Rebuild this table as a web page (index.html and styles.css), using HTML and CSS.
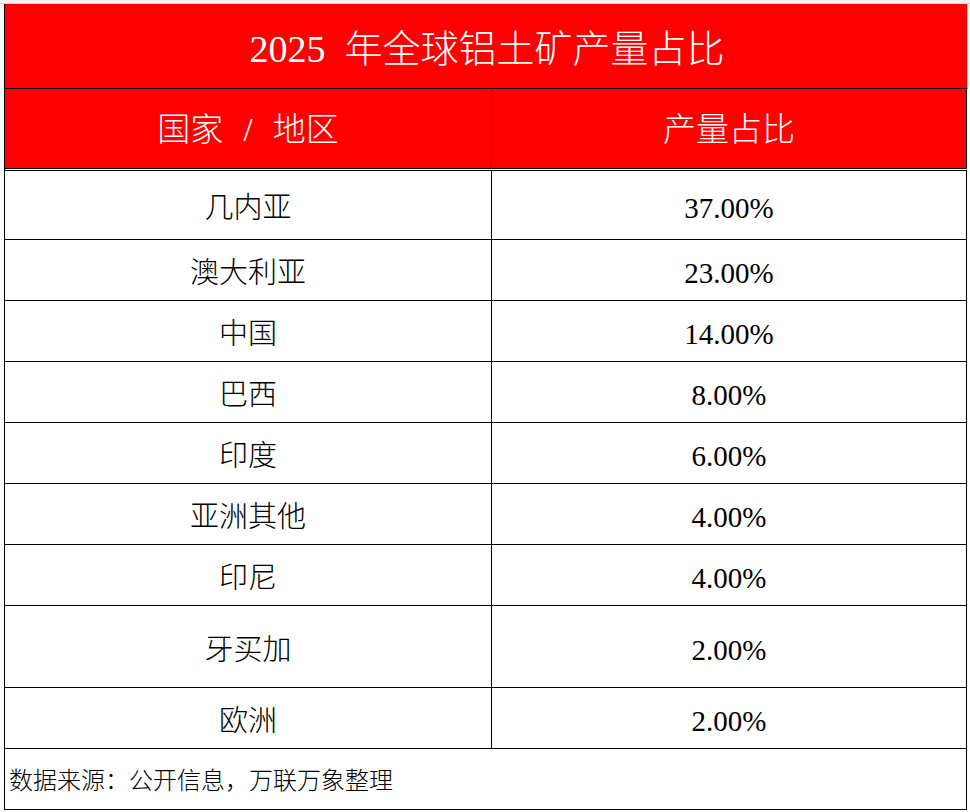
FILE: index.html
```html
<!DOCTYPE html>
<html lang="zh-CN">
<head>
<meta charset="utf-8">
<title>2025 年全球铝土矿产量占比</title>
<link rel="stylesheet" href="styles.css">
</head>
<body>
<div class="topbar"></div>
<div class="sheet">
  <div class="title">2025 年全球铝土矿产量占比</div>
  <div class="grid">
    <div class="row head">
      <div class="cell c1 slash">国家 / 地区</div>
      <div class="cell c2">产量占比</div>
    </div>
    <div class="gap"></div>
    <div class="body">
      <div class="row data first">
        <div class="cell c1">几内亚</div>
        <div class="cell c2">37.00%</div>
      </div>
      <div class="row data">
        <div class="cell c1">澳大利亚</div>
        <div class="cell c2">23.00%</div>
      </div>
      <div class="row data">
        <div class="cell c1">中国</div>
        <div class="cell c2">14.00%</div>
      </div>
      <div class="row data">
        <div class="cell c1">巴西</div>
        <div class="cell c2">8.00%</div>
      </div>
      <div class="row data">
        <div class="cell c1">印度</div>
        <div class="cell c2">6.00%</div>
      </div>
      <div class="row data">
        <div class="cell c1">亚洲其他</div>
        <div class="cell c2">4.00%</div>
      </div>
      <div class="row data">
        <div class="cell c1">印尼</div>
        <div class="cell c2">4.00%</div>
      </div>
      <div class="row data tall">
        <div class="cell c1">牙买加</div>
        <div class="cell c2">2.00%</div>
      </div>
      <div class="row data">
        <div class="cell c1">欧洲</div>
        <div class="cell c2">2.00%</div>
      </div>
      <div class="footer">数据来源：公开信息，万联万象整理</div>
    </div>
  </div>
</div>
</body>
</html>
```

FILE: styles.css
```css
* {
  box-sizing: border-box;
}

html, body {
  margin: 0;
  padding: 0;
  background: #ffffff;
}

body {
  width: 970px;
  height: 812px;
  overflow: hidden;
  font-family: "Liberation Serif", "Noto Sans CJK SC", serif;
  font-weight: 300;
  color: #000000;
}

.topbar {
  height: 4px;
  background: #f2f2f2;
  border-bottom: 1px solid #d6d6d6;
}

.sheet {
  margin-left: 4px;
  width: 964px;
}

.title {
  height: 85px;
  width: 964px;
  background: #ff0000;
  color: #ffffff;
  border-left: 1px solid #000000;
  border-right: 1px solid #d4d4d4;
  border-bottom: 1px solid #000000;
  font-size: 38px;
  word-spacing: 0.25em;
  display: flex;
  align-items: center;
  justify-content: center;
  line-height: 1;
  padding-top: 5px;
  padding-left: 2px;
}

.grid {
  width: 963px;
  border-left: 1px solid #000000;
}

.row {
  display: grid;
  grid-template-columns: 487px 474px;
  border-bottom: 1px solid #000000;
  border-right: 1px solid #000000;
}

.cell {
  display: flex;
  align-items: center;
  justify-content: center;
  line-height: 1;
}

.c1 {
  border-right: 1px solid #000000;
}

.head {
  height: 80px;
  background: #ff0000;
  color: #ffffff;
  font-size: 33px;
}

.head .cell {
  padding-top: 3px;
}

.slash {
  word-spacing: 0.36em;
}

.gap {
  height: 1px;
  background: #ffffff;
}

.body {
  border-top: 1px solid #000000;
}

.data {
  height: 61px;
  font-size: 29px;
}

.data .cell {
  padding-top: 7px;
}

.data.first {
  height: 69px;
}

.data.tall {
  height: 82px;
}

.footer {
  height: 61px;
  border-bottom: 1px solid #000000;
  border-right: 1px solid #000000;
  font-size: 24px;
  line-height: 1;
  display: flex;
  align-items: center;
  padding-left: 4px;
  padding-top: 4px;
}
```
